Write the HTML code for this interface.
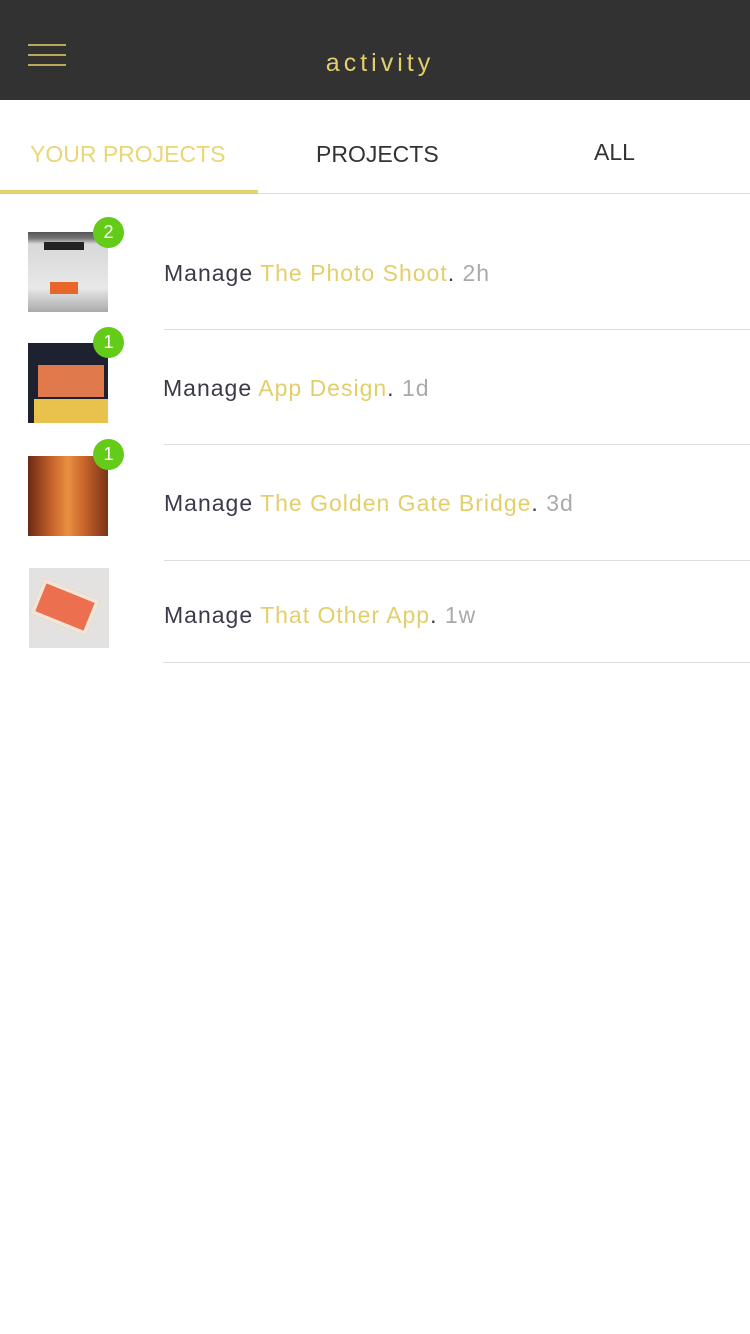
<!DOCTYPE html>
<html><head><meta charset="utf-8"><style>
*{margin:0;padding:0;box-sizing:border-box}
body{width:750px;height:1334px;background:#fff;font-family:"Liberation Sans",sans-serif;position:relative;overflow:hidden}
.hdr{position:absolute;left:0;top:0;width:750px;height:100px;background:#323232}
.hb{position:absolute;left:28px;width:38px;height:2px;background:#b8a95a}
.title{position:absolute;top:49px;left:0;width:760px;text-align:center;color:#e3cf6a;font-size:25px;letter-spacing:4px}
.tab{position:absolute;font-size:23px;top:141px}
.ul{position:absolute;left:0;top:190px;width:258px;height:4px;background:#e3d36c}
.bl{position:absolute;left:0;top:193px;width:750px;height:1px;background:#ddd}
.th{position:absolute;left:28px;width:80px;height:80px}
.badge{position:absolute;left:93px;width:31px;height:31px;border-radius:50%;background:#64cc19;color:#fff;font-size:18px;text-align:center;line-height:31px}
.row{position:absolute;left:164px;font-size:23px;color:#3a3a48;letter-spacing:1px}
.row .y{color:#e3cf6a}.row .g{color:#aaa}
.sep{position:absolute;left:164px;right:0;height:1px;background:#ddd}
</style></head><body>
<div class="hdr">
<div class="hb" style="top:44px"></div><div class="hb" style="top:54px"></div><div class="hb" style="top:64px"></div>
<div class="title">activity</div>
</div>
<div class="tab" style="left:30px;color:#e8d677">YOUR PROJECTS</div>
<div class="tab" style="left:316px;color:#333">PROJECTS</div>
<div class="tab" style="left:594px;top:139px;color:#333">ALL</div>
<div class="bl"></div><div class="ul"></div>

<div class="th" style="top:232px;background:linear-gradient(#555 0,#777 8%,#d8d8d8 15%,#e8e8e8 70%,#aaa 100%)"><div style="position:absolute;left:16px;top:10px;width:40px;height:8px;background:#222"></div><div style="position:absolute;left:22px;top:50px;width:28px;height:12px;background:#e8652c"></div></div>
<div class="badge" style="top:217px">2</div>
<div class="row" style="top:260px">Manage <span class="y">The Photo Shoot</span>. <span class="g">2h</span></div>
<div class="sep" style="top:329px"></div>

<div class="th" style="top:343px;background:#1e2230"><div style="position:absolute;left:10px;top:22px;width:66px;height:32px;background:#e07a4c"></div><div style="position:absolute;left:6px;top:56px;width:74px;height:24px;background:#e8c24c"></div></div>
<div class="badge" style="top:327px">1</div>
<div class="row" style="top:375px;left:163px">Manage <span class="y">App Design</span>. <span class="g">1d</span></div>
<div class="sep" style="top:444px"></div>

<div class="th" style="top:456px;background:linear-gradient(90deg,#6a2a14,#c8642a 30%,#e89040 50%,#c8642a 70%,#7a3418)"></div>
<div class="badge" style="top:439px">1</div>
<div class="row" style="top:490px">Manage <span class="y">The Golden Gate Bridge</span>. <span class="g">3d</span></div>
<div class="sep" style="top:560px"></div>

<div class="th" style="top:568px;left:29px;background:#e4e2e0"><div style="position:absolute;left:6px;top:20px;width:60px;height:38px;background:#ec7050;transform:rotate(22deg);border:4px solid #f0e6d8"></div></div>
<div class="row" style="top:602px">Manage <span class="y">That Other App</span>. <span class="g">1w</span></div>
<div class="sep" style="top:662px;left:163px"></div>
</body></html>
